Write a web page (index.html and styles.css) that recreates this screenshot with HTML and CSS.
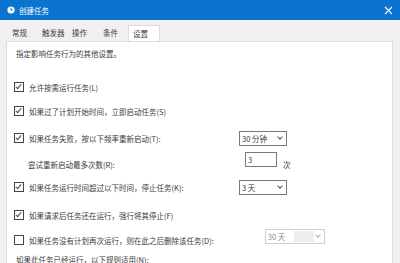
FILE: index.html
```html
<!DOCTYPE html>
<html lang="zh-CN">
<head>
    <meta charset="UTF-8">
    <title>创建任务</title>
    <link rel="stylesheet" href="styles.css">
</head>
<body>

    <div class="window">

        <!-- Title Bar -->
        <div class="titlebar">
            <svg class="title-icon" width="8" height="8" viewBox="0 0 8 8">
                <circle cx="4" cy="4" r="3.6" fill="#fff"/>
                <path d="M4 1.8 V4 H5.8" stroke="#0a74d0" stroke-width="1" fill="none"/>
            </svg>
            <span class="title">创建任务</span>
            <svg class="close" width="9" height="9" viewBox="0 0 9 9">
                <path d="M1 1 L8 8 M8 1 L1 8" stroke="#fff" stroke-width="1.1"/>
            </svg>
        </div>

        <!-- Tabs -->
        <div class="tabs">
            <div class="tab t1">常规</div>
            <div class="tab t2">触发器</div>
            <div class="tab t3">操作</div>
            <div class="tab t4">条件</div>
            <div class="tab t5 active">设置</div>
        </div>

        <!-- Settings Panel -->
        <div class="panel">
            <div class="row intro">指定影响任务行为的其他设置。</div>

            <div class="row r1">
                <span class="check on"></span>
                <span class="label">允许按需运行任务(L)</span>
            </div>

            <div class="row r2">
                <span class="check on"></span>
                <span class="label">如果过了计划开始时间，立即启动任务(S)</span>
            </div>

            <div class="row r3 with-control">
                <span class="check on"></span>
                <span class="label">如果任务失败，按以下频率重新启动(T):</span>
                <div class="select">30 分钟<span class="arrow"></span></div>
            </div>

            <div class="row r4 with-control">
                <span class="label sub">尝试重新启动最多次数(R):</span>
                <div class="spin-group">
                    <div class="spin">3</div>
                    <span class="unit">次</span>
                </div>
            </div>

            <div class="row r5 with-control">
                <span class="check on"></span>
                <span class="label">如果任务运行时间超过以下时间，停止任务(K):</span>
                <div class="select">3 天<span class="arrow"></span></div>
            </div>

            <div class="row r6">
                <span class="check on"></span>
                <span class="label">如果请求后任务还在运行，强行将其停止(F)</span>
            </div>

            <div class="row r7">
                <span class="check"></span>
                <span class="label">如果任务没有计划再次运行，则在此之后删除该任务(D):</span>
                <div class="select disabled">30 天<span class="shade"></span><span class="arrow"></span></div>
            </div>

            <div class="row r8 intro">如果此任务已经运行，以下规则适用(N):</div>
        </div>

    </div>

</body>
</html>
```

FILE: styles.css
```css
body {
    margin: 0;
    padding: 0;
    background-color: #f0f0f0;
    font-family: "Noto Sans CJK SC", "Noto Sans", sans-serif;
    font-size: 7.5px;
    color: #3c3c3c;
}

.window {
    width: 400px;
    height: 263px;
    overflow: hidden;
    display: flex;
    flex-direction: column;
}

/* Title Bar */
.titlebar {
    height: 20px;
    flex-shrink: 0;
    background-color: #0a74d0;
    display: flex;
    align-items: center;
    padding: 0 6px 0 7px;
    color: white;
}

.title-icon {
    margin-right: 4px;
}

.title {
    font-size: 7.5px;
    flex: 1;
}

.close {
    margin-right: 1px;
}

/* Tabs */
.tabs {
    display: flex;
    height: 16px;
    margin-top: 5px;
    padding-left: 6px;
    flex-shrink: 0;
}

.tab {
    height: 16px;
    line-height: 16px;
    box-sizing: border-box;
}

.t1 { width: 30px; padding-left: 6px; }
.t2 { width: 32px; padding-left: 6px; }
.t3 { width: 30px; padding-left: 4px; }
.t4 { width: 30px; padding-left: 5px; }
.t5 { width: 32px; padding-left: 5px; }

.tab.active {
    background-color: #fff;
    border: 1px solid #dcdcdc;
    border-bottom: none;
    line-height: 15px;
    padding-left: 4px;
}

/* Panel */
.panel {
    flex: 1;
    margin: 0 7px 0 6px;
    background-color: #fff;
    border: 1px solid #dcdcdc;
    border-bottom: none;
    padding: 3px 0 0 7px;
}

.row {
    height: 16px;
    display: flex;
    align-items: center;
    margin-top: 9px;
}

.row.intro {
    margin-top: 0;
    padding-left: 2px;
}

.r1 { margin-top: 18px; }
.r2 { margin-top: 8px; }
.r3 { margin-top: 11px; }
.r4 { margin-top: 10px; }
.r5 { margin-top: 7px; }
.r6 { margin-top: 12px; }
.r7 { margin-top: 9px; }
.row.r8 { margin-top: 3px; }

.with-control .label {
    width: 210px;
}

.label.sub {
    padding-left: 14px;
    width: 217px;
}

/* Checkbox */
.check {
    width: 8px;
    height: 8px;
    border: 1px solid #444;
    margin-right: 5px;
    position: relative;
    flex-shrink: 0;
}

.check.on::after {
    content: "";
    position: absolute;
    left: 2px;
    top: 0px;
    width: 2px;
    height: 5px;
    border-right: 1px solid #444;
    border-bottom: 1px solid #444;
    transform: rotate(40deg);
}

/* Dropdowns */
.select {
    width: 48px;
    height: 15px;
    box-sizing: border-box;
    border: 1px solid #7a7a7a;
    display: flex;
    align-items: center;
    padding: 0 3px 0 2px;
    position: relative;
}

.arrow {
    margin-left: auto;
    width: 3px;
    height: 3px;
    border-right: 1px solid #555;
    border-bottom: 1px solid #555;
    transform: rotate(45deg);
    margin-top: -2px;
    margin-right: 1px;
}

.select.disabled {
    width: 60px;
    margin-left: 51px;
    margin-top: -8px;
    border-color: #cfcfcf;
    color: #8a8a8a;
}

.shade {
    width: 20px;
    height: 11px;
    background-color: #ededed;
    margin-left: 9px;
}

.select.disabled .arrow {
    border-color: #aaa;
}

/* Retry count */
.spin-group {
    display: flex;
    align-items: flex-end;
    align-self: flex-start;
    margin-top: -4px;
}

.spin {
    width: 32px;
    height: 15px;
    box-sizing: border-box;
    border: 1px solid #7a7a7a;
    padding-left: 2px;
    line-height: 13px;
}

.unit {
    margin-left: 6px;
    margin-bottom: -3px;
}
```
